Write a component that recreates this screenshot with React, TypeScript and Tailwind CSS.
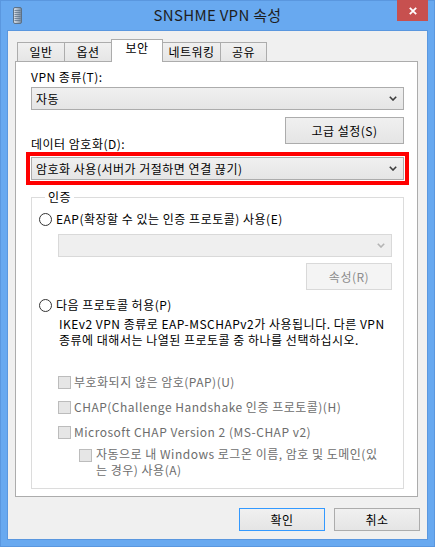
import React from "react";

// Windows 8 style "VPN properties" dialog, security tab

const Chevron = ({ color = "#3c3c3c" }: { color?: string }) => (
  <svg width="8" height="5" viewBox="0 0 8 5">
    <path d="M0.8 0.8 L4 4 L7.2 0.8" fill="none" stroke={color} strokeWidth="1.6" />
  </svg>
);

const ComboBox = ({ text, disabled }: { text?: string; disabled?: boolean }) => (
  <div
    className={
      disabled
        ? "h-[23px] border border-[#d9d9d9] bg-[#efefef] flex items-center justify-between pl-[4px] pr-[6px]"
        : "h-[23px] border border-[#acacac] bg-linear-to-b from-[#f0f0f0] to-[#e5e5e5] flex items-center justify-between pl-[4px] pr-[6px]"
    }
  >
    <span>{text}</span>
    <Chevron color={disabled ? "#b4b4b4" : "#3c3c3c"} />
  </div>
);

const Radio = ({ label }: { label: string }) => (
  <div className="h-[16px] flex items-center gap-[4px]">
    <span className="w-[13px] h-[13px] rounded-full border border-[#333] bg-white shrink-0" />
    <span>{label}</span>
  </div>
);

const DisabledCheck = ({ label }: { label: string }) => (
  <div className="h-[16px] flex items-center gap-[3px] ml-[19px] text-[#6d6d6d]">
    <span className="w-[13px] h-[13px] border border-[#bcbcbc] bg-[#e6e6e6] shrink-0" />
    <span>{label}</span>
  </div>
);

const tabs = [
  { label: "일반", w: "w-[48px]" },
  { label: "옵션", w: "w-[48px]" },
  { label: "보안", w: "w-[52px]", active: true },
  { label: "네트워킹", w: "w-[59px]" },
  { label: "공유", w: "w-[47px]" },
];

export default function App() {
  return (
    <div className="w-[435px] h-[547px] bg-[#68a9f0] shadow-[inset_0_0_0_1px_#5a97df] flex flex-col font-['Noto_Sans_CJK_KR',sans-serif] text-[12px] leading-[16px] tracking-[0.5px] text-black">
      {/* title bar */}
      <div className="h-[30px] flex items-start shrink-0">
        <div className="w-[45px] pl-[13px] pt-[7px]">
          <svg width="9" height="17" viewBox="0 0 9 17">
            <defs>
              <linearGradient id="icn" x1="0" x2="1" y1="0" y2="0">
                <stop offset="0" stopColor="#dfe6ee" />
                <stop offset="1" stopColor="#72869c" />
              </linearGradient>
            </defs>
            <rect x="0.5" y="0.5" width="8" height="16" rx="1.5" fill="url(#icn)" stroke="#5d7186" />
            <path d="M1.5 3.5h6M1.5 5.5h6M1.5 7.5h6M1.5 9.5h6M1.5 11.5h6M1.5 13.5h6" stroke="#61758a" strokeWidth="0.8" />
          </svg>
        </div>
        <div className="flex-1 h-[30px] flex items-center justify-center text-[15px] leading-[20px] tracking-[0.3px] text-[#1e1e1e]">
          SNSHME VPN 속성
        </div>
        <div className="w-[45px] flex justify-end pr-[7px]">
          <div className="w-[31px] h-[21px] bg-[#c7504f] flex items-center justify-center">
            <svg width="8" height="8" viewBox="0 0 8 8">
              <path d="M0.8 0.8 L7.2 7.2 M7.2 0.8 L0.8 7.2" stroke="#fff" strokeWidth="1.8" />
            </svg>
          </div>
        </div>
      </div>

      {/* client area */}
      <div className="flex-1 mx-[7px] mb-[7px] border border-[#5a97df] bg-[#f0f0f0] flex flex-col pt-[8px]">
        <div className="h-[23px] flex items-end pl-[9px] -mb-px">
          {tabs.map((t, i) =>
            t.active ? (
              <div
                key={t.label}
                className={`${t.w} h-[23px] -ml-px border border-b-0 border-[#acacac] bg-white flex justify-center relative z-10`}
              >
                {t.label}
              </div>
            ) : (
              <div
                key={t.label}
                className={`${t.w} h-[20px] ${i === 0 ? "" : "-ml-px"} border border-b-0 border-[#acacac] bg-linear-to-b from-[#f0f0f0] to-[#e5e5e5] flex justify-center pt-px`}
              >
                {t.label}
              </div>
            )
          )}
        </div>

        {/* tab panel */}
        <div className="ml-[7px] mr-[9px] h-[436px] border border-[#acacac] bg-white flex flex-col pl-[15px] pr-[13px]">
          <div className="mt-[7px]">VPN 종류(T):</div>
          <div className="mt-[2px]">
            <ComboBox text="자동" />
          </div>

          <div className="h-[35px] mt-[7px] flex justify-between items-start">
            <div className="pt-[19px]">데이터 암호화(D):</div>
            <button className="w-[119px] h-[27px] border border-[#acacac] bg-linear-to-b from-[#f0f0f0] to-[#e5e5e5]">
              고급 설정(S)
            </button>
          </div>

          <div className="-mx-[5px] border-4 border-[#ff0000] p-px">
            <ComboBox text="암호화 사용(서버가 거절하면 연결 끊기)" />
          </div>

          <fieldset className="mt-[4px] border border-[#dcdcdc] pl-[7px] pr-[11px] pb-[10px] flex flex-col">
            <legend className="ml-[6px] px-[3px] leading-[16px]">인증</legend>

            <div className="mt-[6px]">
              <Radio label="EAP(확장할 수 있는 인증 프로토콜) 사용(E)" />
            </div>
            <div className="mt-[7px] ml-[19px]">
              <ComboBox disabled />
            </div>
            <div className="mt-[6px] flex justify-end">
              <button className="w-[86px] h-[27px] border border-[#d9d9d9] bg-[#f4f4f4] text-[#8c8c8c]">
                속성(R)
              </button>
            </div>

            <div className="mt-[7px]">
              <Radio label="다음 프로토콜 허용(P)" />
            </div>
            <div className="mt-[3px] ml-[20px]">
              <div>IKEv2 VPN 종류로 EAP-MSCHAPv2가 사용됩니다. 다른 VPN</div>
              <div>종류에 대해서는 나열된 프로토콜 중 하나를 선택하십시오.</div>
            </div>

            <div className="mt-[26px]">
              <DisabledCheck label="부호화되지 않은 암호(PAP)(U)" />
            </div>
            <div className="mt-[9px]">
              <DisabledCheck label="CHAP(Challenge Handshake 인증 프로토콜)(H)" />
            </div>
            <div className="mt-[9px]">
              <DisabledCheck label="Microsoft CHAP Version 2 (MS-CHAP v2)" />
            </div>
            <div className="mt-[6px] ml-[40px] flex items-start gap-[4px] text-[#6d6d6d]">
              <span className="mt-[3px] w-[13px] h-[13px] border border-[#bcbcbc] bg-[#e6e6e6] shrink-0" />
              <div>
                <div>자동으로 내 Windows 로그온 이름, 암호 및 도메인(있</div>
                <div>는 경우) 사용(A)</div>
              </div>
            </div>
          </fieldset>
        </div>

        {/* dialog buttons */}
        <div className="mt-[11px] pr-[7px] flex justify-end gap-[9px]">
          <button className="w-[86px] h-[23px] border border-[#3399ff] bg-linear-to-b from-[#f0f0f0] to-[#e5e5e5]">
            확인
          </button>
          <button className="w-[86px] h-[23px] border border-[#acacac] bg-linear-to-b from-[#f0f0f0] to-[#e5e5e5]">
            취소
          </button>
        </div>
      </div>
    </div>
  );
}
